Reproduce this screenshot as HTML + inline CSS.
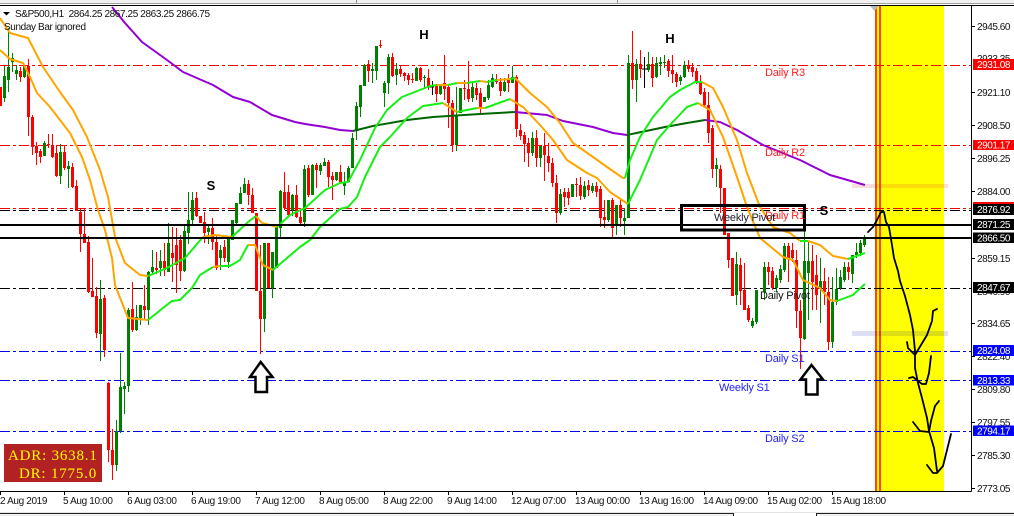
<!DOCTYPE html>
<html><head><meta charset="utf-8"><style>
html,body{margin:0;padding:0;background:#fff;width:1014px;height:516px;overflow:hidden}
svg{display:block}
text{font-family:"Liberation Sans",sans-serif}
.t{font-size:10px;letter-spacing:-.35px;fill:#111}
.p{font-size:10px;letter-spacing:-.45px;fill:#111}
.w{font-size:10px;letter-spacing:-.45px;fill:#fff}
.l{font-size:11px;letter-spacing:-.2px}
.b{font-size:13px;font-weight:bold;fill:#000;text-anchor:middle}
</style></head><body>
<svg width="1014" height="516" viewBox="0 0 1014 516" xmlns="http://www.w3.org/2000/svg">
<rect width="1014" height="516" fill="#fff"/>
<!-- top chrome -->
<rect width="1014" height="4" fill="#f0f0f0"/>
<rect y="3" width="1014" height="1" fill="#a0a0a0"/>
<rect x="356" width="1" height="3" fill="#909090"/><rect x="617" width="1" height="3" fill="#909090"/>
<rect y="5" width="1014" height="1" fill="#000"/>
<!-- yellow band -->
<rect x="881" y="6" width="63" height="485" fill="#ffff00"/>
<rect x="875" y="6" width="2" height="485" fill="#ff4500"/>
<rect x="877" y="6" width="2" height="485" fill="#ffff00"/>
<rect x="879" y="6" width="2" height="485" fill="#ff4500"/>
<path d="M870 6H879L874.500 11Z" fill="#b8b8b8"/>
<rect x="852" y="184" width="96" height="4" fill="#e63c3c" fill-opacity=".18"/>
<rect x="852" y="331" width="96" height="5" fill="#0000b4" fill-opacity=".13"/>
<!-- dashed levels -->
<g fill="none" stroke-width="1" stroke-dasharray="10 3 3 3" shape-rendering="crispEdges">
<path stroke="#f00" d="M0 65.500H971M0 145.500H971M0 208.500H971"/>
<path stroke="#000" d="M0 210.500H971M0 288.500H971"/>
<path stroke="#00f" d="M0 351.500H971M0 380.500H971M0 431.500H971"/>
</g>
<!-- candles -->
<g fill="none" shape-rendering="crispEdges">
<path stroke="#f00" stroke-width="1" d="M.5 87V106M20.500 67V82M28.500 59V136M32.500 115V155M36.500 142V165M40.500 149V163M48.500 134V148M52.500 134V158M56.500 145V177M64.500 145V170M72.500 163V188M76.500 180V211M80.500 208V252M84.500 208V243M88.500 236V293M92.500 258V297M96.500 287V338M104.500 295V357M108.500 382V462M112.500 429V480M132.500 282V332M144.500 285V320M156.500 252V274M164.500 243V276M172.500 227V282M176.500 228V293M180.500 235V281M196.500 192V217M200.500 216V223M204.500 212V243M212.500 218V250M216.500 235V270M224.500 240V262M248.500 180V205M252.500 188V213M256.500 213V291M260.500 245V354M268.500 243V288M284.500 172V210M288.500 185V216M296.500 185V218M300.500 208V224M308.500 165V197M316.500 163V188M328.500 160V187M332.500 172V200M340.500 165V183M368.500 60V82M380.500 40V48M392.500 53V77M400.500 65V77M404.500 72V81M408.500 73V85M412.500 73V83M420.500 67V82M428.500 69V90M436.500 84V102M444.500 55V100M448.500 84V128M452.500 100V152M464.500 80V100M468.500 61V102M476.500 83V100M480.500 88V113M496.500 74V84M500.500 78V96M508.500 74V92M516.500 75V137M520.500 124V140M524.500 132V162M528.500 138V167M536.500 130V167M544.500 133V181M548.500 143V172M552.500 158V187M556.500 175V223M564.500 188V207M568.500 188V205M576.500 178V197M580.500 177V200M588.500 180V196M596.500 182V197M600.500 186V227M604.500 200V228M612.500 198V237M620.500 200V227M632.500 31V89M640.500 50V78M652.500 57V87M668.500 59V77M672.500 55V83M676.500 72V87M688.500 60V72M692.500 63V77M696.500 68V84M700.500 75V95M704.500 88V108M708.500 92V143M712.500 125V178M720.500 165V213M724.500 188V235M728.500 233V268M732.500 258V296M740.500 258V305M744.500 263V310M748.500 305V322M768.500 262V285M772.500 267V290M788.500 243V282M792.500 243V262M796.500 250V328M800.500 300V369M812.500 245V310M816.500 255V310M824.500 268V305M828.500 277V350M848.500 262V280"/>
<path stroke="#f00" stroke-width="3" d="M.5 87V106M20.500 71V77M28.500 66V117M32.500 117V147M36.500 146V153M40.500 151V157M48.500 144V145M52.500 145V157M56.500 153V176M64.500 152V168M72.500 167V187M76.500 186V211M80.500 212V234M84.500 234V243M88.500 242V292M92.500 291V297M96.500 296V333M104.500 298V350M108.500 383V450M112.500 450V465M132.500 309V330M144.500 306V310M156.500 268V270M164.500 261V270M172.500 253V258M176.500 245V265M180.500 240V271M196.500 198V216M200.500 216V223M204.500 222V233M212.500 228V242M216.500 242V268M224.500 247V258M248.500 184V195M252.500 195V213M256.500 213V291M260.500 291V319M268.500 243V288M284.500 192V208M288.500 192V215M296.500 195V217M300.500 217V223M308.500 168V195M316.500 165V170M328.500 162V177M332.500 176V180M340.500 172V182M368.500 64V71M380.500 45V46M392.500 57V76M400.500 69V74M404.500 73V76M408.500 75V80M412.500 79V80M420.500 68V80M428.500 78V86M436.500 86V94M444.500 83V89M448.500 87V103M452.500 103V145M464.500 88V89M468.500 89V99M476.500 88V95M480.500 93V108M496.500 79V82M500.500 82V91M508.500 79V83M516.500 77V129M520.500 130V136M524.500 135V144M528.500 143V153M536.500 138V158M544.500 146V155M548.500 156V163M552.500 163V183M556.500 183V213M564.500 192V197M568.500 192V198M576.500 184V185M580.500 185V196M588.500 185V190M596.500 186V192M600.500 189V218M604.500 217V220M612.500 200V228M620.500 205V218M632.500 63V80M640.500 64V69M652.500 64V78M668.500 61V71M672.500 70V74M676.500 74V82M688.500 65V69M692.500 67V72M696.500 71V82M700.500 83V94M704.500 92V105M708.500 105V133M712.500 128V169M720.500 169V188M724.500 188V235M728.500 233V260M732.500 258V296M740.500 265V291M744.500 290V310M748.500 308V320M768.500 267V272M772.500 271V288M788.500 246V258M792.500 250V258M796.500 260V311M800.500 311V338M812.500 261V282M816.500 275V295M824.500 281V292M828.500 292V342M848.500 267V272"/>
<path stroke="#008000" stroke-width="1" d="M4.500 66V102M8.500 28V92M12.500 53V72M16.500 65V80M24.500 65V78M44.500 141V156M60.500 144V184M68.500 161V188M100.500 280V361M116.500 420V471M120.500 353V433M124.500 382V414M128.500 308V392M136.500 305V331M140.500 305V325M148.500 271V325M152.500 250V274M160.500 250V276M168.500 223V272M184.500 225V272M188.500 192V244M192.500 192V225M208.500 225V244M220.500 245V270M228.500 237V268M232.500 220V240M236.500 203V225M240.500 187V204M244.500 178V193M264.500 243V332M272.500 252V298M276.500 227V268M280.500 190V238M292.500 194V216M304.500 165V227M312.500 164V195M320.500 163V175M324.500 158V166M336.500 172V181M344.500 172V195M348.500 166V182M352.500 133V168M356.500 102V140M360.500 85V117M364.500 64V86M372.500 63V83M376.500 46V80M384.500 81V107M388.500 54V94M396.500 63V85M416.500 67V81M424.500 75V88M440.500 84V95M456.500 87V151M460.500 88V113M472.500 83V102M484.500 97V102M488.500 80V100M492.500 74V88M504.500 78V92M512.500 66V83M532.500 132V156M540.500 146V167M560.500 189V215M572.500 184V197M584.500 181V199M592.500 183V193M608.500 200V222M616.500 205V235M624.500 208V235M628.500 55V218M636.500 59V102M648.500 52V72M656.500 57V78M660.500 57V75M664.500 55V68M680.500 75V85M684.500 61V78M716.500 158V187M736.500 252V305M752.500 318V328M756.500 290V324M764.500 262V300M776.500 275V292M780.500 265V283M784.500 243V272M804.500 225V340M808.500 242V320M820.500 258V323M832.500 277V348M836.500 268V305M840.500 270V290M844.500 262V282M852.500 255V283M856.500 243V258M860.500 240V256M864.500 235V247"/>
<path stroke="#008000" stroke-width="3" d="M4.500 76V98M8.500 67V80M12.500 58V62M16.500 70V74M24.500 66V77M44.500 143V156M60.500 152V176M68.500 166V169M100.500 299V334M116.500 431V465M120.500 387V431M124.500 386V389M128.500 310V386M136.500 317V330M140.500 305V318M148.500 272V310M152.500 267V272M160.500 261V268M168.500 243V272M184.500 231V271M188.500 220V233M192.500 200V220M208.500 228V232M220.500 250V258M228.500 237V262M232.500 220V240M236.500 203V223M240.500 193V204M244.500 184V193M264.500 243V319M272.500 252V288M276.500 227V268M280.500 191V228M292.500 195V210M304.500 169V222M312.500 165V195M320.500 165V171M324.500 162V166M336.500 172V180M344.500 182V186M348.500 168V182M352.500 138V168M356.500 106V131M360.500 85V107M364.500 65V86M372.500 69V71M376.500 46V71M384.500 83V93M388.500 57V83M396.500 69V75M416.500 68V81M424.500 77V78M440.500 84V94M456.500 115V145M460.500 88V113M472.500 87V98M484.500 97V102M488.500 85V98M492.500 78V87M504.500 82V91M512.500 77V83M532.500 138V153M540.500 146V158M560.500 194V213M572.500 184V197M584.500 186V197M592.500 186V191M608.500 200V220M616.500 205V225M624.500 218V221M628.500 63V218M636.500 64V80M648.500 64V70M656.500 63V77M660.500 62V64M664.500 62V63M680.500 77V81M684.500 65V77M716.500 165V169M736.500 264V295M752.500 321V326M756.500 290V322M764.500 267V292M776.500 278V288M780.500 269V280M784.500 246V270M804.500 261V339M808.500 261V273M820.500 281V288M832.500 302V342M836.500 289V302M840.500 277V288M844.500 267V280M852.500 255V274M856.500 252V255M860.500 243V253M864.500 237V245"/>
<path stroke="#000" stroke-width="1" d="M432.500 81V95M644.500 57V88M428 87H434M642 69H648"/>
</g>
<!-- indicators -->
<g fill="none" stroke-width="2" stroke-linejoin="round">
<path stroke="#9400d3" d="M112 7L125 23L142 42L167 60L183 72L213 85L233 97L250 102L272 115L295 122L305 124L325 127L340 130L353 131M515 112L547 115L563 121L593 127L613 133L627 135M705 120L720 122L737 130L763 145L790 156L800 160L830 175L865 185"/>
<path stroke="#006400" d="M353 131L373 126L407 120L433 117L480 114L515 112M627 135L665 127L687 123L705 120"/>
<path stroke="#ffa500" d="M0 18L10 33L28 38L43 67L60 92L73 110L87 137L100 170L108 197L115 237L123 258L125 263L140 275L148 276M0 50L10 59L23 63L30 77L37 93L50 107L70 133L82 157L90 180L98 210L105 230L112 258L115 285L128 318L148 320M203 237L215 235L232 237M256 216L262 223L270 225L277 227M437 85L448 85M457 83L467 83M480 81L487 82M497 80L510 79M515 78L530 93L547 107L560 123L573 143L593 157L607 167L623 178L625 178M702 82L713 88L723 107L737 140L747 173L760 207L773 227L790 233L800 241M808 241L820 245L833 256L848 259M213 267L220 266M248 245L255 245L260 258L263 265L273 270M443 103L457 112M477 108L485 108M510 99L523 107L540 125L553 140L567 160L587 173L597 178L610 192L628 204M698 103L710 110L723 137L737 177L747 207L760 238L783 257L793 260L803 280L820 288L830 300L837 301"/>
<path stroke="#14f014" d="M148 276L167 268L185 258L203 237M232 237L248 222L256 216M277 227L290 215L305 208L325 190L340 183L348 182L360 160L375 128L387 110L402 97L430 86L437 85M448 85L457 83M467 83L480 81M487 82L497 80M510 79L515 78M625 178L630 160L640 137L653 117L670 97L680 90L695 82L702 82M800 241L808 241M848 259L865 253M148 320L163 308L172 301L180 300L192 288L200 275L213 267M220 266L230 266L240 260L248 245M273 270L287 258L300 247L310 240L320 227L340 209L348 207L357 197L365 177L380 147L390 137L407 118L423 106L443 103M457 112L477 108M485 108L510 99M628 204L640 180L657 140L670 125L687 107L698 103M837 301L853 295L865 284"/>
</g>
<!-- solid lines + box -->
<path d="M0 225H971M0 238H971" stroke="#000" stroke-width="2" shape-rendering="crispEdges"/>
<rect x="681.500" y="205.500" width="123" height="24.500" fill="none" stroke="#000" stroke-width="3"/>
<!-- arrows -->
<path d="M260.700 362L250 377H255.500V392H267V377H272.500Z" fill="#fff" stroke="#000" stroke-width="2.500"/>
<path d="M811.500 365L800.500 379.500H806V394.500H817.500V379.500H823Z" fill="#fff" stroke="#000" stroke-width="2.500"/>
<!-- hand drawn -->
<g fill="none" stroke="#000" stroke-width="1.800" stroke-linejoin="round" stroke-linecap="round">
<path d="M868 232L873 227L877 220L881 212L884 212L886 222L889 227L890 233L892 245L894 258L898 271L900 281L905 296L910 315L913 330L915 351L915 368L918 383L922 398L927 418L929 431L934 448L937 471"/>
<path d="M907 342L908 348L915 355L927 335L932 321L933 311L937 309"/>
<path d="M909 378L913 377L922 384L926 384L929 373L931 356"/>
<path d="M913 422L920 431L929 432L931 421L935 406L939 401"/>
<path d="M927 465L933 473L937 473L943 466L947 450L951 434"/>
</g>
<!-- chart labels -->
<text class="b" x="211" y="190">S</text>
<text class="b" x="424" y="39">H</text>
<text class="b" x="670" y="43">H</text>
<text class="b" x="824" y="215">S</text>
<g class="l">
<text class="l" x="765" y="76" fill="#f22">Daily R3</text>
<text class="l" x="765" y="156" fill="#f22">Daily R2</text>
<text class="l" x="765" y="219" fill="#f22">Daily R1</text>
<text class="l" x="714" y="221" fill="#223">Weekly Pivot</text>
<text class="l" x="760" y="299" fill="#111">Daily Pivot</text>
<text class="l" x="765" y="362" fill="#22f">Daily S1</text>
<text class="l" x="719" y="391" fill="#22f">Weekly S1</text>
<text class="l" x="765" y="442" fill="#22f">Daily S2</text>
</g>
<!-- header text -->
<path d="M3 12H10L6.500 15.500Z" fill="#000"/>
<text x="15" y="17" font-size="10" textLength="195" fill="#111" xml:space="preserve">S&amp;P500,H1  2864.25 2867.25 2863.25 2866.75</text>
<text x="4" y="30" font-size="10" textLength="82" fill="#111">Sunday Bar ignored</text>
<!-- ADR box -->
<rect x="4" y="444" width="98" height="38" fill="#b22222"/>
<text x="8" y="460" font-size="15" letter-spacing=".8" fill="#ffff00" style="font-family:'Liberation Serif',serif">ADR: 3638.1</text>
<text x="97" y="478" font-size="15" letter-spacing=".8" text-anchor="end" fill="#ffff00" style="font-family:'Liberation Serif',serif">DR: 1775.0</text>
<!-- axes -->
<path d="M0 491.500H971.500M971.500 5V491.500" fill="none" stroke="#000" shape-rendering="crispEdges"/>
<path d="M971 26.500H975M971 92.500H975M971 125.500H975M971 158.500H975M971 191.500H975M971 258.500H975M971 323.500H975M971 356.500H975M971 389.500H975M971 422.500H975M971 455.500H975M971 488.500H975M.5 491V495M64.500 491V495M128.500 491V495M192.500 491V495M256.500 491V495M320.500 491V495M384.500 491V495M448.500 491V495M512.500 491V495M576.500 491V495M640.500 491V495M704.500 491V495M768.500 491V495M832.500 491V495" stroke="#000" shape-rendering="crispEdges"/>
<g class="p">
<text class="p" x="977" y="30">2945.60</text>
<text class="p" x="977" y="62">2933.35</text>
<text class="p" x="977" y="96">2921.10</text>
<text class="p" x="977" y="129">2908.50</text>
<text class="p" x="977" y="162">2896.25</text>
<text class="p" x="977" y="195">2884.00</text>
<text class="p" x="977" y="262">2859.15</text>
<text class="p" x="977" y="295">2846.90</text>
<text class="p" x="977" y="327">2834.65</text>
<text class="p" x="977" y="360">2822.40</text>
<text class="p" x="977" y="393">2809.80</text>
<text class="p" x="977" y="426">2797.55</text>
<text class="p" x="977" y="459">2785.30</text>
<text class="p" x="977" y="492">2773.05</text>
</g>
<rect x="973" y="59" width="41" height="11" fill="#f00"/><text class="w" x="977" y="68">2931.08</text>
<rect x="973" y="140" width="41" height="10" fill="#f00"/><text class="w" x="977" y="148.500">2901.17</text>
<rect x="973" y="202" width="41" height="2" fill="#f00"/>
<rect x="973" y="204" width="41" height="11" fill="#000"/><text class="w" x="977" y="213">2876.92</text>
<rect x="973" y="219" width="41" height="11" fill="#000"/><text class="w" x="977" y="228">2871.25</text>
<rect x="973" y="232.500" width="41" height="10.500" fill="#000"/><text class="w" x="977" y="241.500">2866.50</text>
<rect x="973" y="282" width="41" height="11" fill="#000"/><text class="w" x="977" y="291">2847.67</text>
<rect x="973" y="345" width="41" height="11" fill="#00f"/><text class="w" x="977" y="354">2824.08</text>
<rect x="973" y="375" width="41" height="10.500" fill="#00f"/><text class="w" x="977" y="384">2813.33</text>
<rect x="973" y="425.500" width="41" height="10.500" fill="#00f"/><text class="w" x="977" y="434.500">2794.17</text>
<text class="t" x="0" y="504">2 Aug 2019</text>
<text class="t" x="63" y="504">5 Aug 10:00</text>
<text class="t" x="127" y="504">6 Aug 03:00</text>
<text class="t" x="191" y="504">6 Aug 19:00</text>
<text class="t" x="255" y="504">7 Aug 12:00</text>
<text class="t" x="319" y="504">8 Aug 05:00</text>
<text class="t" x="383" y="504">8 Aug 22:00</text>
<text class="t" x="447" y="504">9 Aug 14:00</text>
<text class="t" x="511" y="504">12 Aug 07:00</text>
<text class="t" x="575" y="504">13 Aug 00:00</text>
<text class="t" x="639" y="504">13 Aug 16:00</text>
<text class="t" x="703" y="504">14 Aug 09:00</text>
<text class="t" x="767" y="504">15 Aug 02:00</text>
<text class="t" x="831" y="504">15 Aug 18:00</text>
<!-- bottom chrome -->
<rect y="512" width="1014" height="1" fill="#e4e4e4"/>
<rect y="513" width="1014" height="1" fill="#222"/>
<rect y="514" width="1014" height="2" fill="#f0f0f0"/>
<rect x="733" y="513" width="84" height="3" fill="#fff"/>
<rect x="733" y="513" width="1" height="3" fill="#222"/><rect x="816" y="513" width="1" height="3" fill="#222"/>
</svg>
</body></html>
